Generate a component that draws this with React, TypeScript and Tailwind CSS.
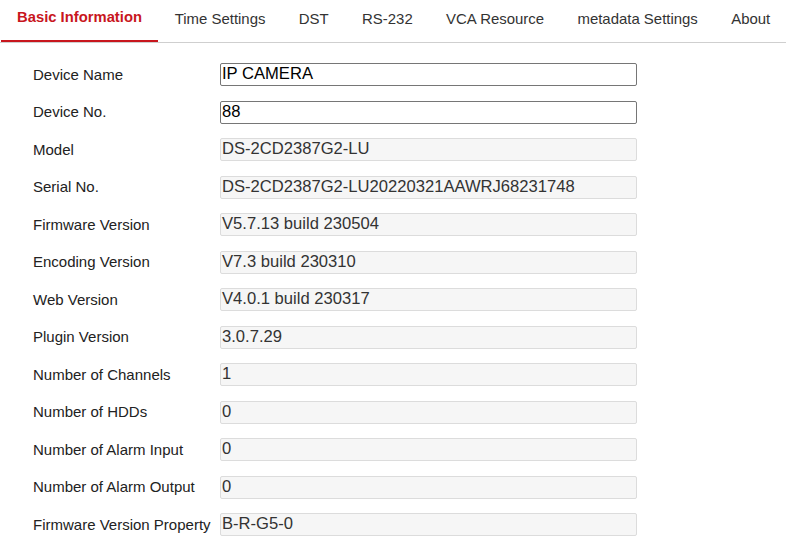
import React from 'react';

const tabs = [
  'Basic Information',
  'Time Settings',
  'DST',
  'RS-232',
  'VCA Resource',
  'metadata Settings',
  'About',
];

const fields: { label: string; value: string; editable?: boolean }[] = [
  { label: 'Device Name', value: 'IP CAMERA', editable: true },
  { label: 'Device No.', value: '88', editable: true },
  { label: 'Model', value: 'DS-2CD2387G2-LU' },
  { label: 'Serial No.', value: 'DS-2CD2387G2-LU20220321AAWRJ68231748' },
  { label: 'Firmware Version', value: 'V5.7.13 build 230504' },
  { label: 'Encoding Version', value: 'V7.3 build 230310' },
  { label: 'Web Version', value: 'V4.0.1 build 230317' },
  { label: 'Plugin Version', value: '3.0.7.29' },
  { label: 'Number of Channels', value: '1' },
  { label: 'Number of HDDs', value: '0' },
  { label: 'Number of Alarm Input', value: '0' },
  { label: 'Number of Alarm Output', value: '0' },
  { label: 'Firmware Version Property', value: 'B-R-G5-0' },
];

export default function App() {
  return (
    <div
      className="w-[786px] h-[558px] bg-white overflow-hidden text-[#333]"
      style={{ fontFamily: '"Liberation Sans", Arial, sans-serif' }}
    >
      {/* Tabs */}
      <div className="flex border-b border-[#cfcfcf] pl-px overflow-hidden whitespace-nowrap">
        {tabs.map((t, i) =>
          i === 0 ? (
            <div
              key={t}
              className="shrink-0 h-[42px] px-[16px] pb-[6px] flex items-center border-b-2 border-[#c8161d] text-[#c8161d] font-bold text-[14.8px]"
            >
              {t}
            </div>
          ) : (
            <div
              key={t}
              className="shrink-0 h-[42px] px-[16.7px] pb-px flex items-center text-[14.95px] text-[#333] border-b-2 border-transparent first-of-type:ml-px"
            >
              {t}
            </div>
          )
        )}
      </div>

      {/* Form */}
      <div className="pt-[13px] pl-[33px]">
        {fields.map((f) => (
          <div key={f.label} className="h-[37.5px] flex items-center">
            <div className="w-[187px] shrink-0 text-[15px] text-[#222] whitespace-nowrap">{f.label}</div>
            {f.editable ? (
              <div className="w-[417px] h-[23px] border border-[#767676] rounded-[2px] bg-white px-px flex items-center text-[16.6px] text-black leading-none">
                {f.value}
              </div>
            ) : (
              <div className="w-[417px] h-[23px] border border-[#dcdcdc] rounded-[2px] bg-[#f6f6f6] px-px flex items-center text-[16.6px] text-[#333] leading-none">
                {f.value}
              </div>
            )}
          </div>
        ))}
      </div>
    </div>
  );
}
